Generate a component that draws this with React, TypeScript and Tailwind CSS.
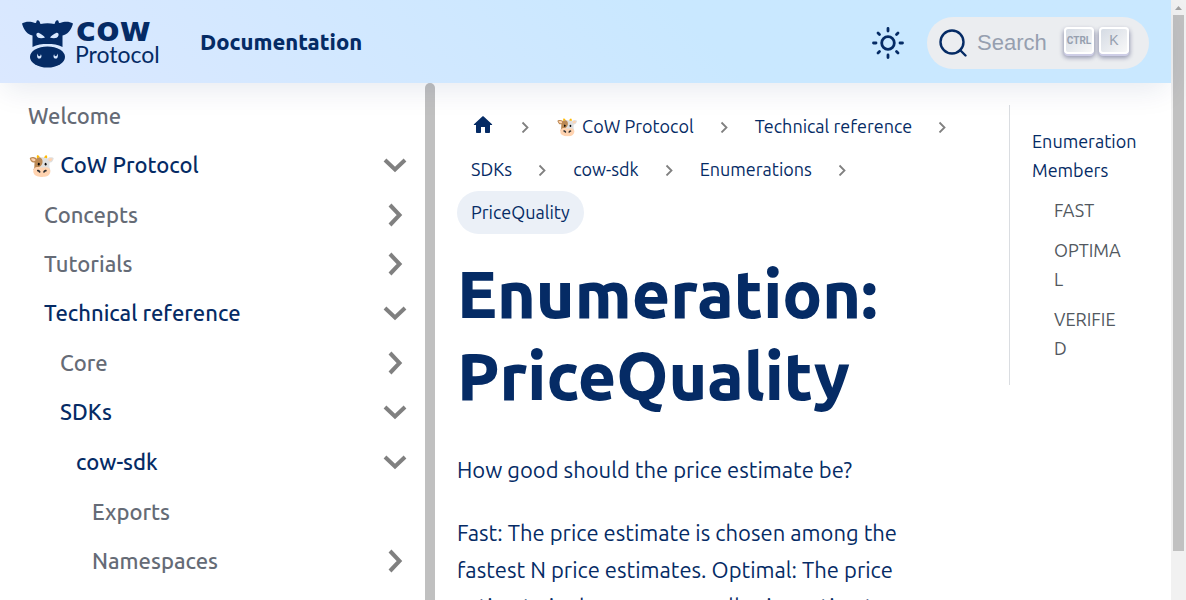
import type { ReactNode } from "react";

function CowMark() {
  return (
    <svg viewBox="0 0 150 50" className="h-[50px] w-[150px] overflow-visible text-[#052b65]" role="img" aria-label="CoW Protocol" fill="currentColor">
      <path d="M0 3.500C4 1 9 1.500 13 3C14 3 14.500 2.500 14.500 1C15 0 16.500 0 17.500 1.500L18.500 4Q25.500 2.500 32.500 4L33.500 1.500C34.500 0 36 0 36.500 1C36.500 2.500 37 3 38 3C42 1.500 47 1 51 3.500C49.500 10 45 15 40.500 15.500V27C36 24.500 31 24 25.500 24S15 24.500 10.500 27V15.500C6 15 1.500 10 0 3.500Z" />
      <ellipse cx="25.500" cy="37" rx="17.500" ry="10.500" />
      <path fill="#d9e8ff" d="M14.500 15.500C14 13.500 15 12.500 16.500 12.700C19 14 22 15.500 23 17.500C20.500 18.500 15.500 19 14.500 15.500ZM36.500 15.500C37 13.500 36 12.500 34.500 12.700C32 14 29 15.500 28 17.500C30.500 18.500 35.500 19 36.500 15.500Z" />
      <path fill="#d9e8ff" d="M15.500 33.500C14.500 36.500 15.500 39 17.500 38.600C19.700 38.200 20 35.500 18.800 34.200C18.700 35.500 18.200 36.200 17.300 36.200S15.900 35.200 15.500 33.500ZM35.500 33.500C36.500 36.500 35.500 39 33.500 38.600C31.300 38.200 31 35.500 32.200 34.200C32.300 35.500 32.800 36.200 33.700 36.200S35.100 35.200 35.500 33.500Z" />
      <text x="54" y="21" fontFamily="DejaVu Sans, sans-serif" fontWeight="700" fontSize="34">cow</text>
      <text x="53" y="43" fontFamily="Lato, sans-serif" fontSize="23" fontWeight="400">Protocol</text>
    </svg>
  );
}

function Chevron({ open }: { open?: boolean }) {
  return (
    <svg viewBox="0 0 24 24" className="size-6 text-[#808080]" fill="none" stroke="currentColor" strokeWidth="4" aria-hidden="true">
      {open ? <path d="M2 7L12 16.500L22 7" /> : <path d="M7 2L16.500 12L7 22" />}
    </svg>
  );
}

function Row({ label, active, open, leaf }: { label: string; active?: boolean; open?: boolean; leaf?: boolean }) {
  return (
    <div className={`flex h-[49px] items-center justify-between pr-[18px] ${active ? "text-[#052b65]" : "text-[#656b76]"}`}>
      <a href="#" className="text-[22px] [font-weight:560] whitespace-nowrap">{label}</a>
      {!leaf && (
        <button type="button" aria-label={`Toggle ${label}`}>
          <Chevron open={open} />
        </button>
      )}
    </div>
  );
}

function Sub({ children }: { children: ReactNode }) {
  return <ul className="mt-px pl-[16px]">{children}</ul>;
}

function Crumb({ children, last }: { children: ReactNode; last?: boolean }) {
  return (
    <li className="flex items-center">
      <a href="#" className={`flex h-[43px] items-center px-[14px] whitespace-nowrap ${last ? "rounded-full bg-[#ebf0f7]" : ""}`}>{children}</a>
      {!last && (
        <svg viewBox="0 0 33 12" className="h-3 w-[33px] text-[#808080]" fill="none" stroke="currentColor" strokeWidth="1.800" aria-hidden="true">
          <path d="M13.500 1.500L18.500 6.500L13.500 11.500" />
        </svg>
      )}
    </li>
  );
}

function Key({ children, className }: { children: ReactNode; className: string }) {
  return (
    <kbd className={`flex h-[27px] w-[30px] items-center justify-center rounded-[4px] border-2 border-white bg-linear-to-br from-[#d5dbe4] to-[#f8f8f8] text-[#969faf] shadow-[0_2px_0_0_#cdcde6,0_3px_4px_1px_rgba(30,35,90,0.4)] ${className}`}>
      {children}
    </kbd>
  );
}

export default function App() {
  return (
    <div className="flex h-screen overflow-hidden bg-white font-['Ubuntu','Noto_Sans',sans-serif] text-[#052b65]">
      <div className="flex min-w-0 flex-1 flex-col">
        <header className="relative z-10 flex h-[83px] shrink-0 items-center bg-linear-45 from-[#dbe8ff] to-[#c9e8ff] to-60% pr-[22px] pl-[22px] shadow-[0_10px_30px_-4px_rgba(12,40,100,0.1)]">
          <a href="#" className="pt-[6px]"><CowMark /></a>
          <a href="#" className="ml-[28px] text-[22px] font-extrabold">Documentation</a>
          <button type="button" aria-label="Switch theme" className="ml-auto pt-[2px]">
            <svg viewBox="0 0 32 32" className="size-8" fill="none" stroke="currentColor" strokeWidth="2.800" strokeLinecap="round" aria-hidden="true">
              <circle cx="16" cy="16" r="6.300" />
              <path d="M16 1.500V4M16 28V30.500M1.500 16H4M28 16H30.500M6 6L7.500 7.500M24.500 24.500L26 26M6 26L7.500 24.500M24.500 7.500L26 6" />
            </svg>
          </button>
          <button type="button" className="mt-[2px] ml-[23px] flex h-[52px] w-[222px] items-center rounded-full bg-[#ebedf0] pr-5 pl-3 font-['Liberation_Sans',sans-serif] text-[22px] text-[#969faf]">
            <svg viewBox="0 0 28 28" className="size-7 text-[#052b65]" fill="none" stroke="currentColor" strokeWidth="2.400" strokeLinecap="round" aria-hidden="true">
              <circle cx="13" cy="13" r="11.500" />
              <path d="M21 21L26.500 26.500" />
            </svg>
            <span className="ml-[10px]">Search</span>
            <span className="ml-auto flex gap-[5px] pb-[4px]">
              <Key className="font-['Ubuntu_Condensed','Liberation_Sans_Narrow','Roboto',sans-serif] text-[10px] font-bold">CTRL</Key>
              <Key className="font-['Liberation_Sans',sans-serif] text-[14px]">K</Key>
            </span>
          </button>
        </header>
        <div className="flex min-h-0 flex-1">
          <nav aria-label="Docs sidebar" className="w-[425px] shrink-0 overflow-hidden pt-[8px] pl-[28px]">
            <ul>
              <li><Row label="Welcome" leaf /></li>
              <li>
                <Row label="🐮 CoW Protocol" active open />
                <Sub>
                  <li><Row label="Concepts" /></li>
                  <li><Row label="Tutorials" /></li>
                  <li>
                    <Row label="Technical reference" active open />
                    <Sub>
                      <li><Row label="Core" /></li>
                      <li>
                        <Row label="SDKs" active open />
                        <Sub>
                          <li>
                            <Row label="cow-sdk" active open />
                            <Sub>
                              <li><Row label="Exports" leaf /></li>
                              <li><Row label="Namespaces" /></li>
                            </Sub>
                          </li>
                        </Sub>
                      </li>
                    </Sub>
                  </li>
                </Sub>
              </li>
            </ul>
          </nav>
          <div className="w-[10px] shrink-0 rounded-t-full bg-[#c0c0c0]" />
          <main className="min-w-0 flex-1 overflow-hidden pt-[22px] pr-[44px] pl-[22px]">
            <nav aria-label="Breadcrumbs">
              <ol className="flex flex-wrap text-[18px]">
                <Crumb>
                  <svg viewBox="0 0 24 24" className="mb-[3px] size-6" fill="currentColor" role="img" aria-label="Home page">
                    <path d="M10 19v-5h4v5c0 .55.45 1 1 1h3c.55 0 1-.45 1-1v-7h1.700c.46 0 .68-.57.33-.87L12.670 3.600c-.38-.34-.96-.34-1.340 0l-8.360 7.530c-.34.3-.13.87.33.87H5v7c0 .55.45 1 1 1h3c.55 0 1-.45 1-1z" />
                  </svg>
                </Crumb>
                <Crumb>🐮 CoW Protocol</Crumb>
                <Crumb>Technical reference</Crumb>
                <Crumb>SDKs</Crumb>
                <Crumb>cow-sdk</Crumb>
                <Crumb>Enumerations</Crumb>
                <Crumb last>PriceQuality</Crumb>
              </ol>
            </nav>
            <h1 className="mt-[18px] text-[66px] leading-[82px] font-extrabold">Enumeration: PriceQuality</h1>
            <div className="mt-[35px] flex flex-col gap-[26px] text-[22px] leading-[37px] [font-weight:450]">
              <p>How good should the price estimate be?</p>
              <p>Fast: The price estimate is chosen among the fastest N price estimates. Optimal: The price estimate is chosen among all price estimates.</p>
            </div>
          </main>
          <aside className="w-[162px] shrink-0 pt-[22px]">
            <ul className="flex h-[280px] flex-col border-l border-[#dadde1] pt-[22px] pr-[22px] pl-[22px] text-[18px] leading-[29px]">
              <li>
                <a href="#">Enumeration Members</a>
                <ul className="mt-[11px] flex flex-col gap-[11px] pr-[22px] pl-[22px] break-all text-[#525860]">
                  <li><a href="#">FAST</a></li>
                  <li><a href="#">OPTIMAL</a></li>
                  <li><a href="#">VERIFIED</a></li>
                </ul>
              </li>
            </ul>
          </aside>
        </div>
      </div>
      <div className="flex w-[15px] shrink-0 flex-col items-center bg-[#f1f1f1]" aria-hidden="true">
        <svg viewBox="0 0 15 15" className="size-[15px]" fill="#a3a3a3"><path d="M4 10L7.500 6L11 10Z" /></svg>
        <div className="h-[536px] w-[11px] bg-[#c1c1c1]" />
      </div>
    </div>
  );
}
